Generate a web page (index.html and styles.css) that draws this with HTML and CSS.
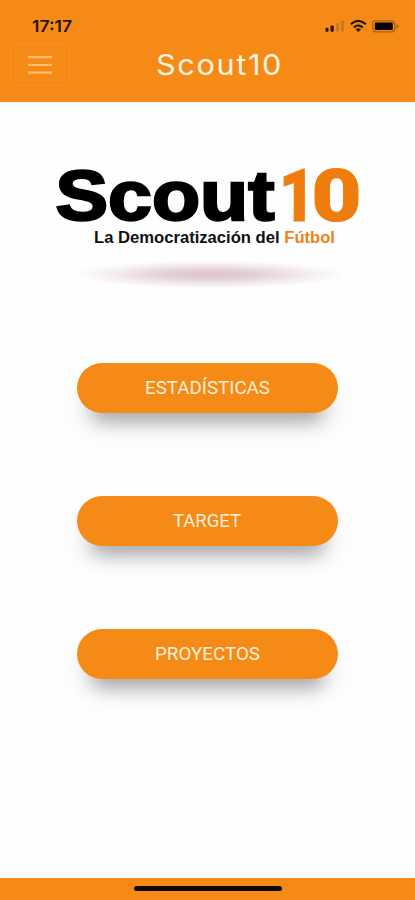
FILE: index.html
```html
<!DOCTYPE html>
<html lang="es">
<head>
<meta charset="utf-8">
<title>Scout10</title>
<link rel="stylesheet" href="styles.css">
</head>
<body>
<header class="header">
  <div class="status">
    <svg class="time" width="44" height="20"><text x="0" y="15" textLength="40" lengthAdjust="spacingAndGlyphs">17:17</text></svg>
    <svg class="indicators" width="76" height="16" viewBox="0 0 76 16">
      <g fill="#241400"><rect x=".5" y="8.8" width="3" height="4" rx="1"/><rect x="5.5" y="6.5" width="3.2" height="6.3" rx="1"/></g>
      <g fill="#bd7420" opacity=".7"><rect x="11" y="4" width="3" height="8.8" rx="1"/><rect x="16" y="1.5" width="3" height="11.3" rx="1"/></g>
      <g fill="none" stroke="#241400" stroke-width="2.1"><path d="M25.8 5.2Q33.3-1.5 40.8 5.2"/><path d="M28.8 8.5Q33.3 4.5 37.8 8.5"/></g>
      <path d="M30.6 10.2Q33.3 8.2 36 10.2L33.3 13z" fill="#241400"/>
      <rect x="47.8" y="1.8" width="22" height="11" rx="3" fill="none" stroke="#a85f0c" stroke-width="1.2"/>
      <rect x="49.8" y="3.5" width="18" height="7.6" rx="1" fill="#080300"/>
      <path d="M71.3 4.6Q76 7.2 71.3 10z" fill="#bd6d13"/>
    </svg>
  </div>
  <nav class="navbar">
    <button class="menu" aria-label="Menú"><svg width="24" height="20" viewBox="0 0 24 20"><path d="M0 2.2H24M0 10H24M0 17.7H24" stroke="#ffbd70" stroke-width="2.2"/></svg></button>
    <svg class="title" width="150" height="38"><text x="0" y="26" textLength="127" lengthAdjust="spacingAndGlyphs">Scout10</text></svg>
  </nav>
</header>
<main class="content">
  <svg class="logo" width="319" height="150" viewBox="48 150 319 150">
    <defs><radialGradient id="glow"><stop offset="0" stop-color="#dcc3cd"/><stop offset=".35" stop-color="#e4d1d8"/><stop offset=".7" stop-color="#f3ecef"/><stop offset="1" stop-color="#fefefe"/></radialGradient></defs>
    <text class="word" x="55.5" y="220" textLength="219" lengthAdjust="spacingAndGlyphs">Scout</text>
    <text class="ten" x="279" y="220.5" textLength="36" lengthAdjust="spacingAndGlyphs">1</text>
    <text class="ten" x="311.5" y="220.5" textLength="50" lengthAdjust="spacingAndGlyphs">0</text>
    <text class="tagline" x="94" y="243" textLength="241" lengthAdjust="spacingAndGlyphs">La Democratización del <tspan class="accent">Fútbol</tspan></text>
    <ellipse cx="210" cy="274.5" rx="136" ry="14" fill="url(#glow)"/>
  </svg>
  <div class="actions">
    <button class="action"><svg width="126" height="28"><text x="0" y="21" textLength="125" lengthAdjust="spacingAndGlyphs">ESTADÍSTICAS</text></svg></button>
    <button class="action"><svg width="69" height="28"><text x="0" y="21" textLength="68" lengthAdjust="spacingAndGlyphs">TARGET</text></svg></button>
    <button class="action"><svg width="106" height="28"><text x="0" y="21" textLength="105" lengthAdjust="spacingAndGlyphs">PROYECTOS</text></svg></button>
  </div>
</main>
<footer class="footer"><div class="home"></div></footer>
</body>
</html>
```
FILE: styles.css
```css
* { box-sizing: border-box; }
body {
  margin: 0;
  height: 900px;
  display: flex;
  flex-direction: column;
  background: #fefefe;
  font-family: Roboto, sans-serif;
}
svg { display: block; }
button { font: inherit; border: 0; }
.header { height: 102px; background: #f58a17; }
.status {
  height: 44px;
  padding: 17px 14px 0 32px;
  display: flex;
  justify-content: space-between;
}
.indicators { margin-top: 2px; }
.time text { font: 600 16.5px Inter, sans-serif; fill: #241400; }
.navbar { display: flex; align-items: flex-start; padding-left: 10px; }
.menu {
  width: 60px;
  height: 42px;
  padding: 0;
  display: grid;
  place-items: center;
  background: transparent;
  border: 1px solid #f79127;
  border-radius: 4px;
}
.title { margin: 5px 0 0 86px; }
.title text { font: 400 28px Inter, sans-serif; letter-spacing: 1.5px; fill: #fff4e2; }
.content { flex: 1; padding-top: 48px; }
.logo { margin-left: 48px; }
.word {
  font: 700 71px "Liberation Sans", sans-serif;
  stroke: #000;
  stroke-width: 2.4px;
}
.ten {
  font: 900 72px Roboto, sans-serif;
  fill: #ef7d0d;
  stroke: #ef7d0d;
  stroke-width: 1px;
}
.tagline { font: 700 16px "Liberation Sans", sans-serif; fill: #111; }
.accent { fill: #ef8118; }
.actions {
  margin: 63px 0 0 77px;
  width: 261px;
  display: grid;
  gap: 83px;
}
.action {
  height: 50px;
  padding: 0 0 2px;
  display: grid;
  place-items: center;
  border-radius: 25px;
  background: #f58a17;
  box-shadow: 0 22px 18px -14px rgba(0, 0, 0, .3), 0 16px 30px -6px rgba(0, 0, 0, .1);
}
.action text { font: 400 19px Roboto, sans-serif; fill: #fff0d9; }
.footer {
  height: 22px;
  padding-top: 8px;
  background: #f58a17;
}
.home {
  width: 148px;
  height: 5px;
  margin-left: 134px;
  border-radius: 3px;
  background: #110a02;
}
```
